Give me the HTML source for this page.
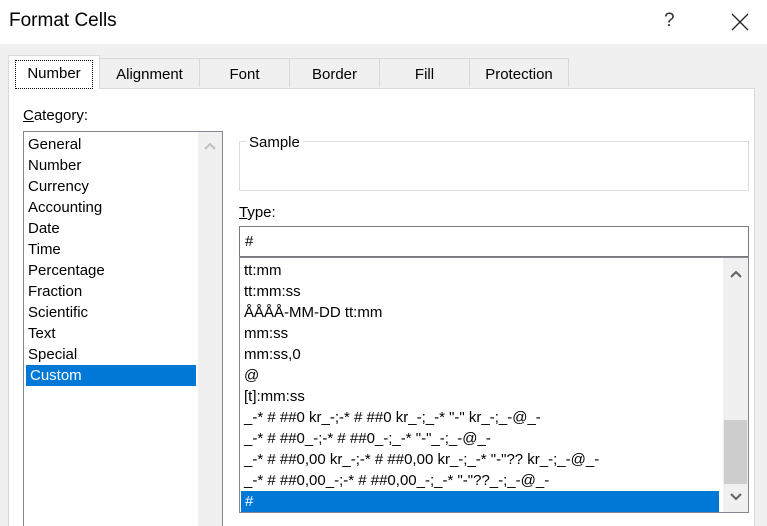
<!DOCTYPE html><html style="overflow:hidden;height:526px"><head><style>
body{margin:0;width:767px;height:526px;background:#f0f0f0;font-family:"Liberation Sans",sans-serif;font-size:15px;color:#000;position:relative;overflow:hidden}
.a{position:absolute}
.tab{position:absolute;top:58px;height:29px;border:1px solid #d9d9d9;border-bottom:none;background:#f0f0f0;text-align:center;line-height:31px;box-sizing:border-box}
.row{height:21px;line-height:22px;padding-left:4px;white-space:nowrap}
.sel{background:#0078d7;color:#fff}
</style></head><body>
<div class="a" style="left:0;top:0;width:767px;height:44px;background:#fff"></div>
<div class="a" style="left:9px;top:10px;font-size:19px">Format Cells</div>
<div class="a" style="left:664px;top:10px;font-size:19px;color:#333">?</div>
<svg class="a" style="left:731px;top:13px" width="18" height="18"><path d="M1 1L17 17M17 1L1 17" stroke="#222" stroke-width="1.3"/></svg>
<div class="a" style="left:8px;top:88px;width:747px;height:440px;background:#fff;border:1px solid #d9d9d9;box-sizing:border-box"></div>
<div class="tab" style="left:99px;width:101px">Alignment</div>
<div class="tab" style="left:199px;width:91px">Font</div>
<div class="tab" style="left:289px;width:91px">Border</div>
<div class="tab" style="left:379px;width:91px">Fill</div>
<div class="tab" style="left:469px;width:100px">Protection</div>
<div class="tab" style="left:8px;top:55px;height:34px;width:92px;background:#fff;line-height:36px"><span style="outline:1px dotted #000;padding:4px 11px 6px">Number</span></div>
<div class="a" style="left:23px;top:107px"><u>C</u>ategory:</div>
<div class="a" style="left:23px;top:131px;width:200px;height:395px;border:1px solid #828790;border-bottom:none;box-sizing:border-box;background:#fff;padding-top:2px">
<div class="row">General</div><div class="row">Number</div><div class="row">Currency</div><div class="row">Accounting</div><div class="row">Date</div><div class="row">Time</div><div class="row">Percentage</div><div class="row">Fraction</div><div class="row">Scientific</div><div class="row">Text</div><div class="row">Special</div><div class="row sel" style="margin-left:2px;width:166px">Custom</div>
<div class="a" style="right:0;top:0;width:24px;height:400px;background:#f0f0f0"></div>
<svg class="a" style="right:6px;top:10px" width="12" height="8"><path d="M1 7L6 2L11 7" stroke="#c0c0c0" stroke-width="2" fill="none"/></svg>
</div>
<div class="a" style="left:239px;top:141px;width:510px;height:50px;border:1px solid #dcdcdc;box-sizing:border-box"></div>
<div class="a" style="left:246px;top:134px;background:#fff;padding:0 3px">Sample</div>
<div class="a" style="left:239px;top:204px"><u>T</u>ype:</div>
<div class="a" style="left:239px;top:226px;width:510px;height:31px;border:1px solid #7a7a7a;box-sizing:border-box;line-height:30px;padding-left:5px">#</div>
<div class="a" style="left:239px;top:257px;width:510px;height:256px;border:1px solid #828790;box-sizing:border-box;background:#fff;padding-top:2px">
<div class="row">tt:mm</div><div class="row">tt:mm:ss</div><div class="row">ÅÅÅÅ-MM-DD tt:mm</div><div class="row">mm:ss</div><div class="row">mm:ss,0</div><div class="row">@</div><div class="row">[t]:mm:ss</div>
<div class="row">_-* # ##0 kr_-;-* # ##0 kr_-;_-* "-" kr_-;_-@_-</div>
<div class="row">_-* # ##0_-;-* # ##0_-;_-* "-"_-;_-@_-</div>
<div class="row">_-* # ##0,00 kr_-;-* # ##0,00 kr_-;_-* "-"?? kr_-;_-@_-</div>
<div class="row">_-* # ##0,00_-;-* # ##0,00_-;_-* "-"??_-;_-@_-</div>
<div class="row sel" style="width:474px;margin-left:1px">#</div>
<div class="a" style="right:0;top:0;width:25px;height:254px;background:#f0f0f0"></div>
<div class="a" style="right:1px;top:162px;width:23px;height:64px;background:#cdcdcd"></div>
<svg class="a" style="right:6px;top:12px" width="12" height="8"><path d="M1 7L6 2L11 7" stroke="#606060" stroke-width="2" fill="none"/></svg>
<svg class="a" style="right:6px;top:235px" width="12" height="8"><path d="M1 1L6 6L11 1" stroke="#606060" stroke-width="2" fill="none"/></svg>
</div>
</body></html>
